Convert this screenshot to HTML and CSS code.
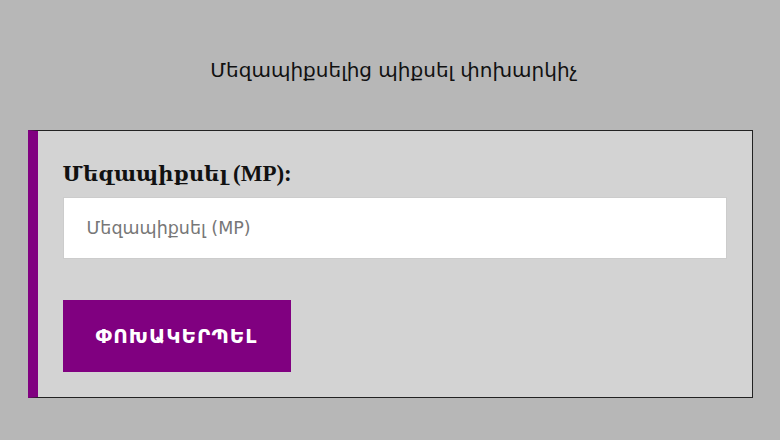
FILE: index.html
```html
<!DOCTYPE html>
<html lang="hy">
<head>
<meta charset="utf-8">
<title>Մեզապիքսելից պիքսել փոխարկիչ</title>
<link rel="stylesheet" href="styles.css">
</head>
<body>
<h1 class="title">Մեզապիքսելից պիքսել փոխարկիչ</h1>
<div class="card">
  <label class="label" for="mp">Մեզապիքսել <span class="label-unit">(MP):</span></label>
  <input class="input" id="mp" type="text" placeholder="Մեզապիքսել (MP)">
  <button class="btn" type="button">Փոխակերպել</button>
</div>
</body>
</html>
```
FILE: styles.css
```css
html, body {
  margin: 0;
  padding: 0;
  background: #b7b7b7;
}
body {
  font-family: "DejaVu Sans", sans-serif;
  color: #111;
}
.title {
  margin: 0 0 45px 0;
  padding: 55px 0 0 8px;
  text-align: center;
  font-size: 20px;
  font-weight: normal;
  line-height: 30px;
}
.card {
  box-sizing: border-box;
  width: 725px;
  margin: 0 auto;
  background: #d3d3d3;
  border: 1px solid #222;
  border-left: 10px solid #800080;
  padding: 24px 25px 25px 25px;
}
.label {
  display: block;
  margin-bottom: 4px;
  font-family: "Liberation Serif", "DejaVu Serif", serif;
  font-weight: bold;
  font-size: 21px;
  line-height: 38px;
  color: #111;
}
.label-unit {
  font-size: 23px;
}
.input {
  display: block;
  box-sizing: border-box;
  width: 100%;
  height: 62px;
  margin: 0;
  padding: 0 23px;
  border: 1px solid #ccc;
  background: #fff;
  font-family: "DejaVu Sans", sans-serif;
  font-size: 17.5px;
  color: #333;
}
.input::placeholder {
  color: #777;
}
.btn {
  display: block;
  margin-top: 41px;
  width: 228px;
  height: 72px;
  border: 0;
  background: #800080;
  color: #fff;
  font-family: "DejaVu Sans", sans-serif;
  font-weight: bold;
  font-size: 20px;
  text-transform: uppercase;
  letter-spacing: 1px;
}
```
